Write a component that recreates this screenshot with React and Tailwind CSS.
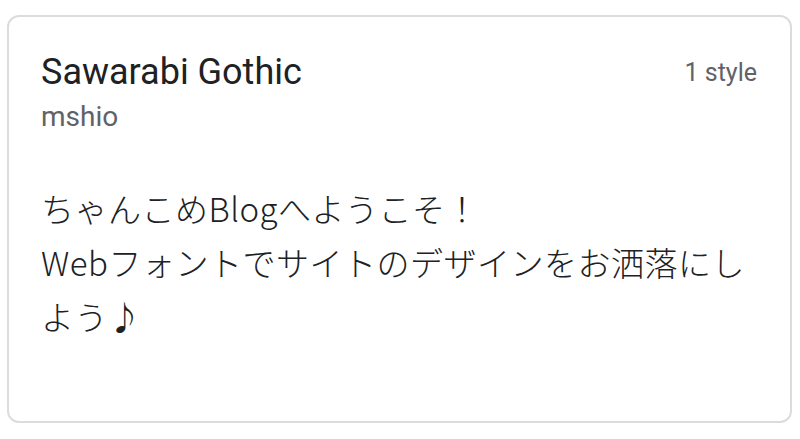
import React from 'react';

const FontCard = () => {
  return (
    <div className="w-[800px] h-[439px] bg-white pt-[15px] pl-[7px]">
      <div className="w-[785px] h-[408px] rounded-[12px] border-2 border-[#dadce0] px-[32px] pt-[33px]">
        {/* Header */}
        <div className="flex items-start justify-between">
          <div>
            <h1 className="text-[36px] leading-[44px] text-[#202124] font-['Roboto',sans-serif]">
              Sawarabi Gothic
            </h1>
            <p className="mt-[6px] text-[28px] leading-[34px] text-[#5f6368] font-['Roboto',sans-serif]">
              mshio
            </p>
          </div>
          <span className="mt-[8px] mr-[1px] text-[25px] leading-[30px] text-[#5f6368] font-['Roboto',sans-serif]">
            1 style
          </span>
        </div>

        {/* Sample text */}
        <p className="mt-[47px] text-[33px] leading-[54px] tracking-[0.5px] font-light text-[#202124] font-['Noto_Sans_CJK_JP',sans-serif]">
          ちゃんこめBlogへようこそ！
          <br />
          Webフォントでサイトのデザインをお洒落にし
          <br />
          よう♪
        </p>
      </div>
    </div>
  );
};

export default function App() {
  return <FontCard />;
}
